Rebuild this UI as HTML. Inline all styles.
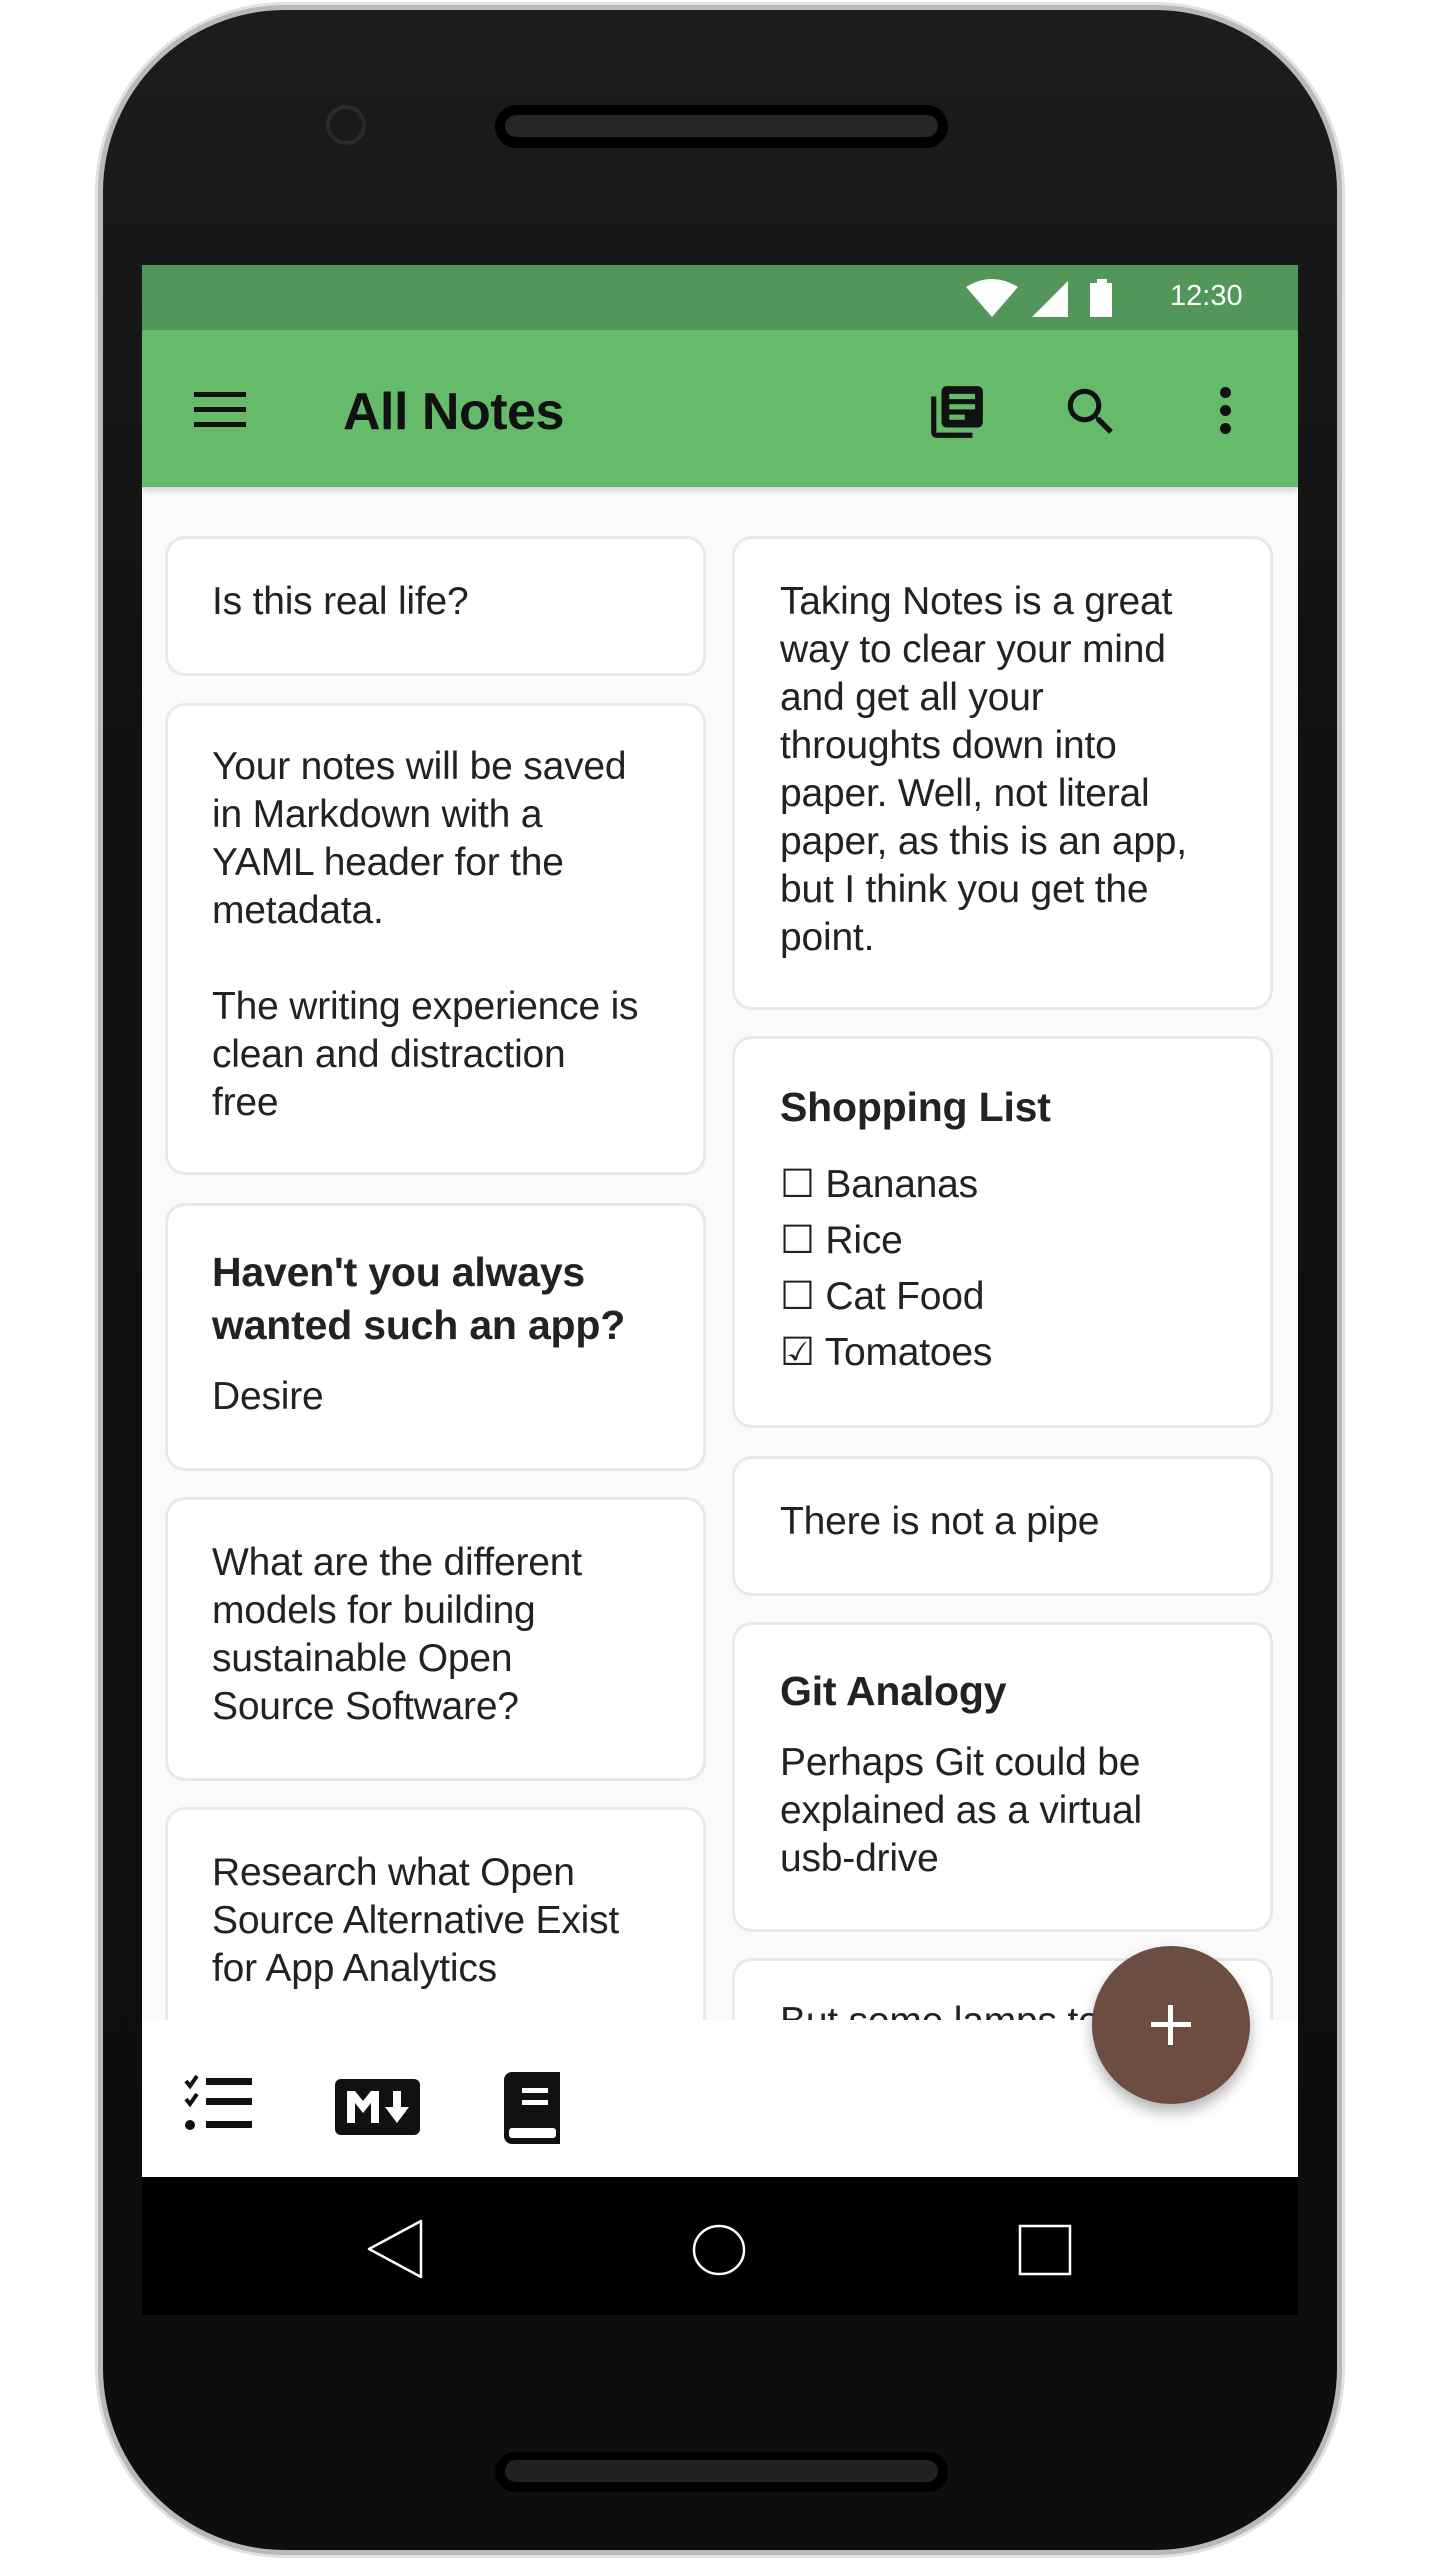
<!DOCTYPE html>
<html><head><meta charset="utf-8">
<style>
*{margin:0;padding:0;box-sizing:border-box}
body{width:1440px;height:2560px;background:#fff;position:relative;overflow:hidden;font-family:"Liberation Sans",sans-serif}
.abs{position:absolute}
.phone{left:95px;top:2px;width:1250px;height:2556px;border-radius:190px;background:#b9b9b9;border:3px solid #e2e2e2}
.inner{left:103px;top:10px;width:1234px;height:2540px;border-radius:182px;background:linear-gradient(#1c1c1c,#101010 30%,#0e0e0e)}
.screen{left:142px;top:265px;width:1156px;height:2050px;background:#fafafa;overflow:hidden}
.card{position:absolute;background:#fff;border:3px solid #e9e9e9;border-radius:20px}
.t{position:absolute;font-size:39px;line-height:48px;color:#222;white-space:nowrap;letter-spacing:-0.2px}
.b{font-weight:bold;font-size:41px;line-height:53px;color:#222}
</style></head><body>
<div class="abs phone"></div>
<div class="abs inner"></div>
<div class="abs" style="left:495px;top:105px;width:453px;height:43px;border-radius:22px;background:#000"></div>
<div class="abs" style="left:505px;top:115px;width:433px;height:22px;border-radius:11px;background:#262626"></div>
<div class="abs" style="left:326px;top:105px;width:40px;height:40px;border-radius:50%;background:#1a1a1a;border:4px solid #2a2a2a"></div>
<div class="abs" style="left:495px;top:2452px;width:453px;height:40px;border-radius:20px;background:#000"></div>
<div class="abs" style="left:505px;top:2460px;width:433px;height:22px;border-radius:11px;background:#222"></div>

<div class="abs screen">
  <div class="card" style="left:23px;top:271px;width:541px;height:140px"></div>
  <div class="card" style="left:23px;top:438px;width:541px;height:472px"></div>
  <div class="card" style="left:23px;top:938px;width:541px;height:268px"></div>
  <div class="card" style="left:23px;top:1232px;width:541px;height:284px"></div>
  <div class="card" style="left:23px;top:1542px;width:541px;height:300px"></div>
  <div class="card" style="left:590px;top:271px;width:541px;height:474px"></div>
  <div class="card" style="left:590px;top:771px;width:541px;height:392px"></div>
  <div class="card" style="left:590px;top:1191px;width:541px;height:140px"></div>
  <div class="card" style="left:590px;top:1357px;width:541px;height:310px"></div>
  <div class="card" style="left:590px;top:1693px;width:541px;height:200px"></div>

  <div class="t" style="left:70px;top:313px">Is this real life?</div>
  <div class="t" style="left:70px;top:478px">Your notes will be saved<br>in Markdown with a<br>YAML header for the<br>metadata.<br><br>The writing experience is<br>clean and distraction<br>free</div>
  <div class="t b" style="left:70px;top:981px">Haven't you always<br>wanted such an app?</div>
  <div class="t" style="left:70px;top:1108px">Desire</div>
  <div class="t" style="left:70px;top:1274px">What are the different<br>models for building<br>sustainable Open<br>Source Software?</div>
  <div class="t" style="left:70px;top:1584px">Research what Open<br>Source Alternative Exist<br>for App Analytics</div>

  <div class="t" style="left:638px;top:313px">Taking Notes is a great<br>way to clear your mind<br>and get all your<br>throughts down into<br>paper. Well, not literal<br>paper, as this is an app,<br>but I think you get the<br>point.</div>
  <div class="t b" style="left:638px;top:816px">Shopping List</div>
  <div class="t" style="left:638px;top:892px;line-height:56px">☐ Bananas<br>☐ Rice<br>☐ Cat Food<br>☑ Tomatoes</div>
  <div class="t" style="left:638px;top:1233px">There is not a pipe</div>
  <div class="t b" style="left:638px;top:1400px">Git Analogy</div>
  <div class="t" style="left:638px;top:1474px">Perhaps Git could be<br>explained as a virtual<br>usb-drive</div>
  <div class="t" style="left:638px;top:1733px">But some lamps to</div>

  <div class="abs" style="left:0;top:0;width:1156px;height:65px;background:#52965a"></div>
  <svg class="abs" style="left:820px;top:12px" width="150" height="44" viewBox="0 0 150 44">
    <path d="M4 10 Q30 -6 56 10 L30 40 Z" fill="#fff"/>
    <path d="M70 40 L106 4 L106 40 Z" fill="#fff"/>
    <rect x="128" y="6" width="24" height="34" fill="#fff"/><rect x="135" y="2" width="10" height="5" fill="#fff"/>
  </svg>
  <div class="abs" style="left:1028px;top:13px;color:#fff;font-size:29px;line-height:36px">12:30</div>
  <div class="abs" style="left:0;top:65px;width:1156px;height:157px;background:#66bb6a;box-shadow:0 4px 6px rgba(0,0,0,.15)"></div>
  <div class="abs" style="left:52px;top:127px;width:52px;height:5px;background:#111;box-shadow:0 15px 0 #111,0 30px 0 #111"></div>
  <div class="abs" style="left:201px;top:112px;font-size:52px;line-height:70px;color:#111;font-weight:bold;letter-spacing:-0.5px">All Notes</div>
  <svg class="abs" style="left:784px;top:116px" width="62" height="62" viewBox="0 0 24 24"><path fill="#111" d="M4 6H2v14c0 1.1.9 2 2 2h14v-2H4V6zm16-4H8c-1.1 0-2 .9-2 2v12c0 1.1.9 2 2 2h12c1.1 0 2-.9 2-2V4c0-1.1-.9-2-2-2zm-1 9H9V9h10v2zm-4 4H9v-2h6v2zm4-8H9V5h10v2z"/></svg>
  <svg class="abs" style="left:918px;top:116px" width="62" height="62" viewBox="0 0 24 24"><path fill="#111" d="M15.5 14h-.79l-.28-.27A6.47 6.47 0 0016 9.5 6.5 6.5 0 109.5 16c1.61 0 3.09-.59 4.23-1.57l.27.28v.79l5 4.99L20.49 19l-4.99-5zm-6 0C7.01 14 5 11.99 5 9.5S7.01 5 9.5 5 14 7.01 14 9.5 11.99 14 9.5 14z"/></svg>
  <div class="abs" style="left:1078px;top:122px;width:11px;height:11px;border-radius:50%;background:#111;box-shadow:0 18px 0 #111,0 36px 0 #111"></div>

  <div class="abs" style="left:0;top:1755px;width:1156px;height:157px;background:#fff"></div>
  <svg class="abs" style="left:42px;top:1810px" width="70" height="58" viewBox="0 0 70 58">
    <path d="M2 6 L6 11 L13 1" stroke="#111" stroke-width="4" fill="none"/>
    <path d="M2 24 L6 29 L13 19" stroke="#111" stroke-width="4" fill="none"/>
    <circle cx="6" cy="50" r="5" fill="#111"/>
    <rect x="22" y="3" width="46" height="7" fill="#111"/><rect x="22" y="23" width="46" height="7" fill="#111"/><rect x="22" y="46" width="46" height="7" fill="#111"/>
  </svg>
  <svg class="abs" style="left:193px;top:1814px" width="85" height="56" viewBox="0 0 85 56">
    <rect x="0" y="0" width="85" height="56" rx="6" fill="#111"/>
    <path d="M12 44V12h8l8 10 8-10h8v32h-8V24l-8 10-8-10v20z" fill="#fff"/>
    <path d="M58 12h8v16h8L62 44 50 28h8z" fill="#fff"/>
  </svg>
  <svg class="abs" style="left:362px;top:1807px" width="60" height="72" viewBox="0 0 60 72">
    <path d="M8 0h48v72H8a8 8 0 01-8-8V8a8 8 0 018-8z" fill="#111"/>
    <rect x="5" y="56" width="47" height="10" rx="3" fill="#fff"/>
    <rect x="18" y="16" width="26" height="5" fill="#fff"/><rect x="18" y="28" width="26" height="5" fill="#fff"/>
  </svg>
  <div class="abs" style="left:950px;top:1681px;width:158px;height:158px;border-radius:50%;background:#6d4c41;box-shadow:0 8px 14px rgba(0,0,0,.3)"></div>
  <div class="abs" style="left:1009px;top:1757px;width:40px;height:5px;background:#fff"></div>
  <div class="abs" style="left:1026px;top:1740px;width:5px;height:40px;background:#fff"></div>
  <div class="abs" style="left:0;top:1912px;width:1156px;height:138px;background:#000"></div>
  <svg class="abs" style="left:0;top:1912px" width="1156" height="138">
    <path d="M279 44 L227 72 L279 100 Z" stroke="#fff" stroke-width="2.5" fill="none" stroke-linejoin="round"/>
    <ellipse cx="577" cy="73" rx="25" ry="24" stroke="#fff" stroke-width="2.5" fill="none"/>
    <rect x="878" y="49" width="50" height="48" stroke="#fff" stroke-width="2.5" fill="none"/>
  </svg>
</div>
</body></html>
